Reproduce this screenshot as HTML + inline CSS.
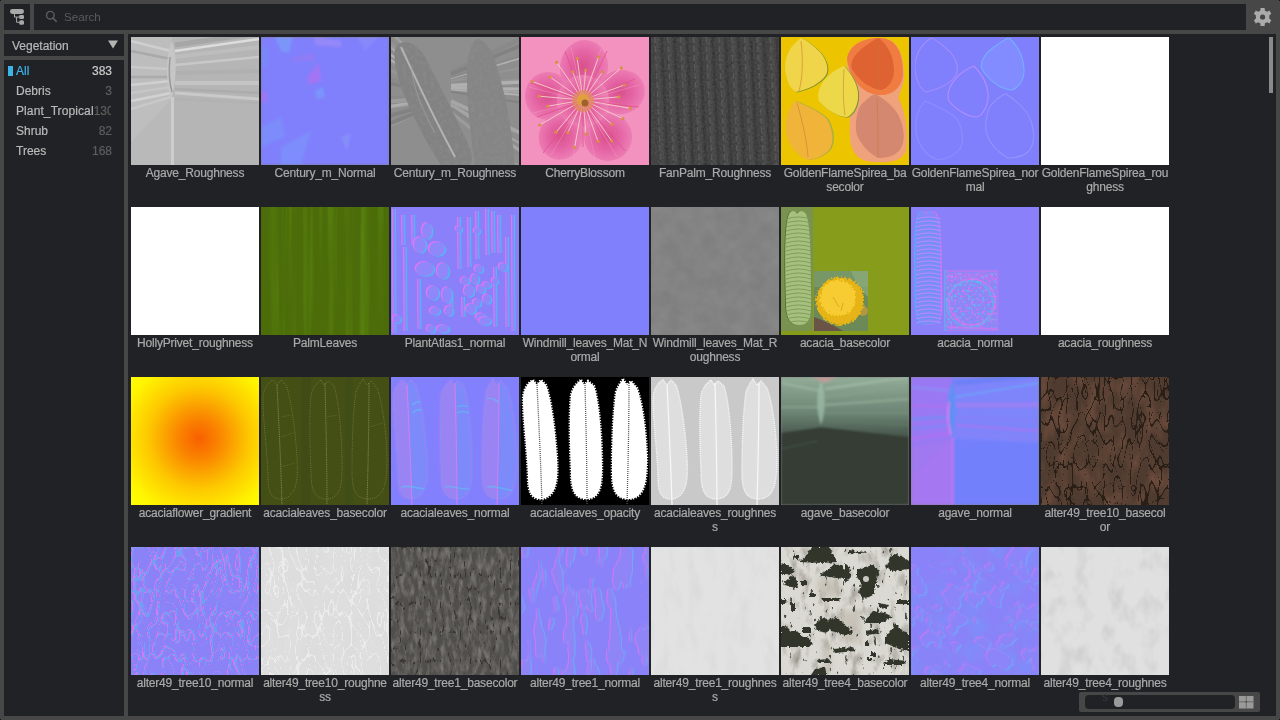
<!DOCTYPE html>
<html><head><meta charset="utf-8"><style>
*{margin:0;padding:0;box-sizing:border-box}
html,body{width:1280px;height:720px;overflow:hidden}
body{will-change:transform;background:#474747;font-family:"Liberation Sans",sans-serif;position:relative}
.tb-icon{position:absolute;left:4px;top:4px;width:26px;height:26px;background:#212225}
.tb-icon svg{position:absolute;left:0;top:0}
.search{position:absolute;left:34px;top:4px;width:1212px;height:26px;background:#212225}
.sicon{position:absolute;left:10px;top:5px}
.stext{position:absolute;left:30px;top:6px;font-size:11.6px;color:#5c5c5c;line-height:14px}
.gear{position:absolute;left:1250px;top:4px;width:26px;height:26px}
.gear svg{position:absolute;left:0;top:0}
.dd{position:absolute;left:4px;top:34px;width:120px;height:22px;background:#212225}
.dd span{position:absolute;left:8px;top:5px;font-size:12px;line-height:14px;color:#b8b8b8;-webkit-text-stroke:0.2px #b8b8b8}
.tri{position:absolute;left:104px;top:6px}
.list{position:absolute;left:4px;top:60px;width:120px;height:656px;background:#212225}
.it{position:relative;height:20px;width:120px}
.it:first-child{margin-top:1px}
.nm{position:absolute;left:12px;top:3px;font-size:12px;line-height:14px;color:#bababa;white-space:nowrap;-webkit-text-stroke:0.2px #bababa}
.ct{position:absolute;right:12px;top:3px;font-size:12px;line-height:14px;color:#5e5e5e;white-space:nowrap;-webkit-text-stroke:0.2px #5e5e5e}
.pt{position:absolute;left:12px;top:3px;width:95px;overflow:hidden;white-space:nowrap;font-size:12px;line-height:14px}
.pt .a{color:#bababa;-webkit-text-stroke:0.2px #bababa;letter-spacing:0.1px}
.pt .b{color:#5e5e5e;-webkit-text-stroke:0.2px #5e5e5e}
.sel .nm{color:#3cb4ea;-webkit-text-stroke:0.2px #3cb4ea}
.sel .ct{color:#cacaca;-webkit-text-stroke:0.2px #cacaca}
.mk{position:absolute;left:4px;top:5px;width:5px;height:10px;background:#3cb4ea}
.grid{position:absolute;left:128px;top:34px;width:1148px;height:682px;background:#212225;overflow:hidden}
.cell{position:absolute;width:128px;height:168px}
.th{position:absolute;left:0;top:0;width:128px;height:128px;overflow:hidden;background:#808080}
.th svg{display:block}
.lb{position:absolute;left:-10px;top:129px;width:148px;text-align:center;font-size:12px;line-height:14px;color:#aaaaaa;white-space:nowrap;letter-spacing:-0.2px;-webkit-text-stroke:0.2px #aaaaaa}
.sb{position:absolute;left:1141px;top:3px;width:4px;height:56px;background:#8a8a8a}
.slider{position:absolute;left:951px;top:658px;width:181px;height:20px;background:#474747;border-radius:2px}
.track{position:absolute;left:6px;top:3px;width:150px;height:14px;background:#212225;border-radius:4px}
.ghost{position:absolute;left:17px;top:-5px;font-size:12px;line-height:14px;color:#3a3a3a}
.thumb{position:absolute;left:29px;top:2px;width:9px;height:10px;background:#9a9a9a;border-radius:4px}
.gicon{position:absolute;left:160px;top:4px}

</style></head><body>
<div class="tb-icon"><svg width="26" height="26" viewBox="0 0 26 26">
<rect x="6" y="5" width="14" height="5" rx="2.4" fill="#a9a9a9"/>
<rect x="15.2" y="11" width="4.8" height="4" rx="1.3" fill="#a9a9a9"/>
<rect x="15.2" y="16.2" width="4.8" height="4.6" rx="1.5" fill="#a9a9a9"/>
<path d="M10.5 10 V13.1 H15.5 M12.6 13.1 V18.3 H15.5" stroke="#a9a9a9" stroke-width="1" fill="none"/>
</svg></div>
<div class="search"><svg class="sicon" width="16" height="16" viewBox="0 0 16 16"><circle cx="6.3" cy="6.2" r="3.8" stroke="#5c5c5c" stroke-width="1.4" fill="none"/><path d="M9 9 L12.2 12.4" stroke="#5c5c5c" stroke-width="1.6" stroke-linecap="round"/></svg><span class="stext">Search</span></div>
<div class="gear"><svg width="26" height="26" viewBox="0 0 26 26"><g transform="translate(12.6,13) scale(1.06)" fill="#ababab">
<path d="M-1.9 -8.4 H1.9 L2.2 -6 L4.3 -4.9 L6.4 -6.2 L8.2 -3 L6.3 -1.5 L6.3 1.5 L8.2 3 L6.4 6.2 L4.3 4.9 L2.2 6 L1.9 8.4 H-1.9 L-2.2 6 L-4.3 4.9 L-6.4 6.2 L-8.2 3 L-6.3 1.5 L-6.3 -1.5 L-8.2 -3 L-6.4 -6.2 L-4.3 -4.9 L-2.2 -6 Z"/>
<circle r="5.9"/></g><circle cx="12.6" cy="13" r="2.6" fill="#474747"/></svg></div>
<div class="dd"><span>Vegetation</span><svg class="tri" width="10" height="9" viewBox="0 0 10 9"><path d="M0 0.5 H10 L5 8.5 Z" fill="#b4b4b4"/></svg></div>
<div class="list">
 <div class="it sel"><i class="mk"></i><span class="nm">All</span><span class="ct">383</span></div>
 <div class="it"><span class="nm">Debris</span><span class="ct">3</span></div>
 <div class="it"><div class="pt"><span class="a">Plant_Tropical</span><span class="b">130</span></div></div>
 <div class="it"><span class="nm">Shrub</span><span class="ct">82</span></div>
 <div class="it"><span class="nm">Trees</span><span class="ct">168</span></div>
</div>
<div class="grid">
<div class="cell" style="left:3px;top:3px"><div class="th t1"><svg width="128" height="128" viewBox="0 0 128 128"><defs><filter id="wb1" x="0" y="0" width="100%" height="100%"><feGaussianBlur stdDeviation="0.7"/></filter></defs><g filter="url(#wb1)">
<rect width="128" height="128" fill="#b5b5b5"/>
<rect x="0" y="0" width="41" height="70" fill="#bdbdbd"/>
<polygon points="0,70 41,62 41,128 0,128" fill="#b9b9b9"/>
<polygon points="0,105 41,62 0,70" fill="#c2c2c2" opacity="0.6"/>
<g stroke-width="2.5" fill="none">
<path d="M0 4 L40 14" stroke="#cfcfcf"/>
<path d="M0 14 L40 22" stroke="#a9a9a9"/>
<path d="M0 30 L40 32" stroke="#c9c9c9"/>
<path d="M0 40 L40 40" stroke="#ababab"/>
<path d="M0 48 L40 44" stroke="#d0d0d0"/>
<path d="M0 56 L40 50" stroke="#c6c6c6"/>
<path d="M0 64 L40 56" stroke="#d2d2d2"/>
<path d="M0 72 L40 60" stroke="#c8c8c8"/>
<path d="M44 14 L128 2" stroke="#dcdcdc"/>
<path d="M44 8 L128 -4" stroke="#a6a6a6" stroke-width="5"/>
<path d="M44 20 L128 10" stroke="#bdbdbd" stroke-width="4"/>
<path d="M44 28 L128 20" stroke="#c8c8c8"/>
<path d="M44 36 L128 34" stroke="#b0b0b0" stroke-width="4"/>
<path d="M44 46 L128 46" stroke="#c4c4c4" stroke-width="4"/>
<path d="M44 52 L128 56" stroke="#acacac"/>
<path d="M44 56 L128 62" stroke="#c9c9c9" stroke-width="3"/>
<path d="M44 62 L128 66" stroke="#b2b2b2"/>
</g>
<rect x="40" y="60" width="3" height="68" fill="#cdcdcd"/>
<path d="M41 5 C35 15 34 45 40 62 C46 45 46 15 41 5Z" fill="#c6c6c6"/>
<path d="M39 20 C38 30 38 45 41 55" stroke="#9a9a9a" stroke-width="1.5" fill="none"/>
</g></svg></div><div class="lb">Agave_Roughness</div></div><div class="cell" style="left:133px;top:3px"><div class="th t2"><svg width="128" height="128" viewBox="0 0 128 128"><defs><filter id="wb2" x="0" y="0" width="100%" height="100%"><feGaussianBlur stdDeviation="1.0"/></filter></defs><g filter="url(#wb2)">
<rect width="128" height="128" fill="#8080fd"/>
<polygon points="14,0 32,0 28,16 20,14" fill="#7a9af8" opacity="0.8"/>
<polygon points="54,0 80,4 80,10 54,8" fill="#9a8af8" opacity="0.8"/>
<polygon points="32,20 54,16 54,24 30,24" fill="#9a78f0" opacity="0.6"/>
<polygon points="46,40 58,26 60,44 48,48" fill="#b070f0" opacity="0.7"/>
<polygon points="54,54 62,50 64,60 56,62" fill="#7898f8" opacity="0.8"/>
<polygon points="0,56 6,54 6,64 0,66" fill="#b070f0" opacity="0.6"/>
<polygon points="0,90 20,80 24,100 0,110" fill="#7898f8" opacity="0.5"/>
<polygon points="20,110 50,94 40,128 20,128" fill="#78a0f8" opacity="0.4"/>
<polygon points="96,0 118,0 104,14" fill="#8890f8" opacity="0.6"/>
<polygon points="80,100 90,96 86,114" fill="#8a98f8" opacity="0.6"/>
<polygon points="0,10 8,10 6,30 0,30" fill="#7090f8" opacity="0.4"/>
</g></svg></div><div class="lb">Century_m_Normal</div></div><div class="cell" style="left:263px;top:3px"><div class="th t3"><svg width="128" height="128" viewBox="0 0 128 128"><defs><filter id="c3b" x="0" y="0" width="100%" height="100%"><feGaussianBlur stdDeviation="0.4"/></filter><clipPath id="c3c"><path d="M6 8 C14 2 26 6 34 20 C46 44 60 70 72 96 C80 112 84 124 78 128 L50 128 C38 110 24 84 14 60 C6 40 0 18 6 8Z"/><path d="M86 2 C94 2 102 14 106 30 C114 56 120 86 124 128 L84 128 C80 100 76 70 76 44 C76 24 78 8 86 2Z"/></clipPath><filter id="c3n" x="0" y="0" width="100%" height="100%" color-interpolation-filters="sRGB"><feTurbulence type="fractalNoise" baseFrequency="0.25" numOctaves="3" seed="33" result="n"/><feColorMatrix in="n" type="matrix" values="0 0 0 0 0.56  0 0 0 0 0.56  0 0 0 0 0.56  1.2 0 0 0 -0.5"/></filter></defs>
<rect width="128" height="128" fill="#8e8e8e"/>
<g filter="url(#c3b)"><path d="M-5 60.2 L40 60.1" stroke="#8a8a8a" stroke-width="2.8"/><path d="M133 41.8 L60 47.5" stroke="#959595" stroke-width="1.5"/><path d="M-5 45.5 L40 54.9" stroke="#828282" stroke-width="3.1"/><path d="M133 58.1 L60 52.4" stroke="#b0b0b0" stroke-width="2.1"/><path d="M-5 -9.8 L40 35.6" stroke="#b0b0b0" stroke-width="1.9"/><path d="M133 55.1 L60 51.5" stroke="#a6a6a6" stroke-width="2.3"/><path d="M-5 21.1 L40 46.4" stroke="#b0b0b0" stroke-width="3.5"/><path d="M133 1.0 L60 35.3" stroke="#8a8a8a" stroke-width="3.5"/><path d="M-5 90.9 L40 70.8" stroke="#9c9c9c" stroke-width="1.5"/><path d="M133 -1.0 L60 34.7" stroke="#8a8a8a" stroke-width="2.8"/><path d="M-5 3.5 L40 40.2" stroke="#959595" stroke-width="3.9"/><path d="M133 6.7 L60 37.0" stroke="#959595" stroke-width="3.9"/><path d="M-5 69.8 L40 63.4" stroke="#b0b0b0" stroke-width="2.9"/><path d="M133 134.5 L60 75.3" stroke="#9c9c9c" stroke-width="2.9"/><path d="M-5 65.1 L40 61.8" stroke="#9c9c9c" stroke-width="2.5"/><path d="M133 52.0 L60 50.6" stroke="#b0b0b0" stroke-width="2.7"/><path d="M-5 80.2 L40 67.1" stroke="#b0b0b0" stroke-width="1.6"/><path d="M133 97.5 L60 64.2" stroke="#a6a6a6" stroke-width="3.9"/><path d="M-5 88.2 L40 69.9" stroke="#828282" stroke-width="3.9"/><path d="M133 118.2 L60 70.5" stroke="#959595" stroke-width="3.2"/><path d="M-5 6.8 L40 41.4" stroke="#a6a6a6" stroke-width="2.3"/><path d="M133 44.9 L60 48.5" stroke="#b0b0b0" stroke-width="3.5"/><path d="M-5 64.0 L40 61.4" stroke="#9c9c9c" stroke-width="2.5"/><path d="M133 117.1 L60 70.1" stroke="#9c9c9c" stroke-width="2.8"/><path d="M-5 22.9 L40 47.0" stroke="#959595" stroke-width="1.6"/><path d="M133 20.3 L60 41.1" stroke="#b0b0b0" stroke-width="1.8"/><path d="M-5 71.4 L40 64.0" stroke="#a6a6a6" stroke-width="1.7"/><path d="M133 30.5 L60 44.2" stroke="#959595" stroke-width="2.2"/><path d="M-5 40.9 L40 53.3" stroke="#8a8a8a" stroke-width="3.3"/><path d="M133 66.1 L60 54.8" stroke="#828282" stroke-width="2.0"/><path d="M-5 31.7 L40 50.1" stroke="#959595" stroke-width="3.2"/><path d="M133 116.6 L60 70.0" stroke="#a6a6a6" stroke-width="3.9"/><path d="M-5 14.8 L40 44.2" stroke="#b0b0b0" stroke-width="2.4"/><path d="M133 18.0 L60 40.4" stroke="#8a8a8a" stroke-width="2.0"/><path d="M-5 79.8 L40 66.9" stroke="#828282" stroke-width="3.8"/><path d="M133 108.6 L60 67.6" stroke="#a6a6a6" stroke-width="2.1"/><path d="M-5 -8.7 L40 35.9" stroke="#9c9c9c" stroke-width="2.1"/><path d="M133 7.2 L60 37.2" stroke="#828282" stroke-width="4.0"/><path d="M-5 64.5 L40 61.6" stroke="#9c9c9c" stroke-width="3.8"/><path d="M133 120.5 L60 71.2" stroke="#8a8a8a" stroke-width="3.6"/></g>
<path d="M6 8 C14 2 26 6 34 20 C46 44 60 70 72 96 C80 112 84 124 78 128 L50 128 C38 110 24 84 14 60 C6 40 0 18 6 8Z" fill="#828282"/>
<path d="M86 2 C94 2 102 14 106 30 C114 56 120 86 124 128 L84 128 C80 100 76 70 76 44 C76 24 78 8 86 2Z" fill="#858585"/>
<g clip-path="url(#c3c)"><rect width="128" height="128" filter="url(#c3n)"/></g>
<path d="M10 10 C24 40 40 76 64 120" stroke="#b4b4b4" stroke-width="2" fill="none"/>
<path d="M20 28 C22 50 30 70 44 96" stroke="#a0a0a0" stroke-width="1.2" fill="none" opacity="0.6"/>
</svg></div><div class="lb">Century_m_Roughness</div></div><div class="cell" style="left:393px;top:3px"><div class="th t4"><svg width="128" height="128" viewBox="0 0 128 128"><defs><radialGradient id="cbg" cx="0.48" cy="0.5" r="0.5"><stop offset="0" stop-color="#d8508c"/><stop offset="0.5" stop-color="#e462a2"/><stop offset="1" stop-color="#ec7cb4"/></radialGradient><filter id="cbb" x="0" y="0" width="100%" height="100%"><feGaussianBlur stdDeviation="0.5"/></filter></defs>
<rect width="128" height="128" fill="#f392be"/>
<g fill="url(#cbg)" filter="url(#cbb)">
<ellipse cx="63" cy="30" rx="24" ry="27" transform="rotate(8 63 30)"/>
<ellipse cx="100" cy="55" rx="24" ry="22" transform="rotate(-15 100 55)"/>
<ellipse cx="27" cy="59" rx="23" ry="24"/>
<ellipse cx="40" cy="99" rx="22" ry="24" transform="rotate(25 40 99)"/>
<ellipse cx="87" cy="100" rx="24" ry="24" transform="rotate(-20 87 100)"/>
<circle cx="62" cy="64" r="26"/>
</g>
<g stroke="#f8a0c8" stroke-width="0.8" opacity="0.5" fill="none">
<path d="M62 64 L50 10 M62 64 L80 12 M62 64 L118 48 M62 64 L112 72 M62 64 L8 50 M62 64 L12 76 M62 64 L30 118 M62 64 L52 120 M62 64 L96 120 M62 64 L74 122"/>
</g>
<path d="M62 64 L44 14 M62 64 L86 14 M62 64 L114 42 M62 64 L118 70 M62 64 L10 46 M62 64 L16 80 M62 64 L22 116 M62 64 L62 110 M62 64 L104 114 M62 64 L84 104" stroke="#e0508a" stroke-width="0.8"/>
<path d="M62 63 L11.3 44.5" stroke="#f6d0c8" stroke-width="0.9"/><circle cx="11.3" cy="44.5" r="1.6" fill="#d89040"/><path d="M62 63 L29.2 40.1" stroke="#f6d0c8" stroke-width="0.9"/><circle cx="29.2" cy="40.1" r="1.6" fill="#d89040"/><path d="M62 63 L35.6 25.3" stroke="#f6d0c8" stroke-width="0.9"/><circle cx="35.6" cy="25.3" r="1.6" fill="#d89040"/><path d="M62 63 L51.7 34.8" stroke="#f6d0c8" stroke-width="0.9"/><circle cx="51.7" cy="34.8" r="1.6" fill="#d89040"/><path d="M62 63 L56.2 21.4" stroke="#f6d0c8" stroke-width="0.9"/><circle cx="56.2" cy="21.4" r="1.6" fill="#d89040"/><path d="M62 63 L64.6 33.1" stroke="#f6d0c8" stroke-width="0.9"/><circle cx="64.6" cy="33.1" r="1.6" fill="#d89040"/><path d="M62 63 L77.7 19.8" stroke="#f6d0c8" stroke-width="0.9"/><circle cx="77.7" cy="19.8" r="1.6" fill="#d89040"/><path d="M62 63 L81.5 35.1" stroke="#f6d0c8" stroke-width="0.9"/><circle cx="81.5" cy="35.1" r="1.6" fill="#d89040"/><path d="M62 63 L100.3 30.9" stroke="#f6d0c8" stroke-width="0.9"/><circle cx="100.3" cy="30.9" r="1.6" fill="#d89040"/><path d="M62 63 L103.3 48.0" stroke="#f6d0c8" stroke-width="0.9"/><circle cx="103.3" cy="48.0" r="1.6" fill="#d89040"/><path d="M62 63 L97.9 59.9" stroke="#f6d0c8" stroke-width="0.9"/><circle cx="97.9" cy="59.9" r="1.6" fill="#d89040"/><path d="M62 63 L109.3 71.3" stroke="#f6d0c8" stroke-width="0.9"/><circle cx="109.3" cy="71.3" r="1.6" fill="#d89040"/><path d="M62 63 L101.9 81.6" stroke="#f6d0c8" stroke-width="0.9"/><circle cx="101.9" cy="81.6" r="1.6" fill="#d89040"/><path d="M62 63 L91.1 87.4" stroke="#f6d0c8" stroke-width="0.9"/><circle cx="91.1" cy="87.4" r="1.6" fill="#d89040"/><path d="M62 63 L90.7 104.0" stroke="#f6d0c8" stroke-width="0.9"/><circle cx="90.7" cy="104.0" r="1.6" fill="#d89040"/><path d="M62 63 L77.0 104.3" stroke="#f6d0c8" stroke-width="0.9"/><circle cx="77.0" cy="104.3" r="1.6" fill="#d89040"/><path d="M62 63 L65.0 96.9" stroke="#f6d0c8" stroke-width="0.9"/><circle cx="65.0" cy="96.9" r="1.6" fill="#d89040"/><path d="M62 63 L53.7 110.3" stroke="#f6d0c8" stroke-width="0.9"/><circle cx="53.7" cy="110.3" r="1.6" fill="#d89040"/><path d="M62 63 L46.8 95.6" stroke="#f6d0c8" stroke-width="0.9"/><circle cx="46.8" cy="95.6" r="1.6" fill="#d89040"/><path d="M62 63 L35.0 95.2" stroke="#f6d0c8" stroke-width="0.9"/><circle cx="35.0" cy="95.2" r="1.6" fill="#d89040"/><path d="M62 63 L18.7 88.0" stroke="#f6d0c8" stroke-width="0.9"/><circle cx="18.7" cy="88.0" r="1.6" fill="#d89040"/><path d="M62 63 L26.5 69.3" stroke="#f6d0c8" stroke-width="0.9"/><circle cx="26.5" cy="69.3" r="1.6" fill="#d89040"/><path d="M62 63 L18.2 59.2" stroke="#f6d0c8" stroke-width="0.9"/><circle cx="18.2" cy="59.2" r="1.6" fill="#d89040"/>
<circle cx="62" cy="64" r="11" fill="#e08860" opacity="0.8"/>
<circle cx="62" cy="63" r="6" fill="#e0a040"/>
<circle cx="64" cy="66" r="3.5" fill="#a06030"/>
</svg></div><div class="lb">CherryBlossom</div></div><div class="cell" style="left:523px;top:3px"><div class="th t5"><svg width="128" height="128" viewBox="0 0 128 128"><defs><filter id="fpn" x="0" y="0" width="100%" height="100%"><feTurbulence type="fractalNoise" baseFrequency="0.45" numOctaves="2" seed="3"/><feColorMatrix type="matrix" values="0 0 0 0 0.3  0 0 0 0 0.3  0 0 0 0 0.3  1 0 0 0 0"/></filter></defs><rect width="128" height="128" fill="#363636"/><path d="M4.0 0 L10.0 128" stroke="#4e4e4e" stroke-width="1.8" stroke-dasharray="6 3"/><path d="M6.0 0 L12.0 128" stroke="#3e3e3e" stroke-width="3"/><path d="M10.5 0 L16.5 128" stroke="#2c2c2c" stroke-width="2.5"/><path d="M16.8 0 L22.8 128" stroke="#4e4e4e" stroke-width="1.8" stroke-dasharray="6 3"/><path d="M18.8 0 L24.8 128" stroke="#3e3e3e" stroke-width="3"/><path d="M23.3 0 L29.3 128" stroke="#2c2c2c" stroke-width="2.5"/><path d="M29.6 0 L35.6 128" stroke="#4e4e4e" stroke-width="1.8" stroke-dasharray="6 3"/><path d="M31.6 0 L37.6 128" stroke="#3e3e3e" stroke-width="3"/><path d="M36.1 0 L42.1 128" stroke="#2c2c2c" stroke-width="2.5"/><path d="M42.4 0 L48.4 128" stroke="#4e4e4e" stroke-width="1.8" stroke-dasharray="6 3"/><path d="M44.4 0 L50.4 128" stroke="#3e3e3e" stroke-width="3"/><path d="M48.9 0 L54.9 128" stroke="#2c2c2c" stroke-width="2.5"/><path d="M55.2 0 L61.2 128" stroke="#4e4e4e" stroke-width="1.8" stroke-dasharray="6 3"/><path d="M57.2 0 L63.2 128" stroke="#3e3e3e" stroke-width="3"/><path d="M61.7 0 L67.7 128" stroke="#2c2c2c" stroke-width="2.5"/><path d="M68.0 0 L74.0 128" stroke="#4e4e4e" stroke-width="1.8" stroke-dasharray="6 3"/><path d="M70.0 0 L76.0 128" stroke="#3e3e3e" stroke-width="3"/><path d="M74.5 0 L80.5 128" stroke="#2c2c2c" stroke-width="2.5"/><path d="M80.8 0 L86.8 128" stroke="#4e4e4e" stroke-width="1.8" stroke-dasharray="6 3"/><path d="M82.8 0 L88.8 128" stroke="#3e3e3e" stroke-width="3"/><path d="M87.3 0 L93.3 128" stroke="#2c2c2c" stroke-width="2.5"/><path d="M93.6 0 L99.6 128" stroke="#4e4e4e" stroke-width="1.8" stroke-dasharray="6 3"/><path d="M95.6 0 L101.6 128" stroke="#3e3e3e" stroke-width="3"/><path d="M100.1 0 L106.1 128" stroke="#2c2c2c" stroke-width="2.5"/><path d="M106.4 0 L112.4 128" stroke="#4e4e4e" stroke-width="1.8" stroke-dasharray="6 3"/><path d="M108.4 0 L114.4 128" stroke="#3e3e3e" stroke-width="3"/><path d="M112.9 0 L118.9 128" stroke="#2c2c2c" stroke-width="2.5"/><path d="M119.2 0 L125.2 128" stroke="#4e4e4e" stroke-width="1.8" stroke-dasharray="6 3"/><path d="M121.2 0 L127.2 128" stroke="#3e3e3e" stroke-width="3"/><path d="M125.7 0 L131.7 128" stroke="#2c2c2c" stroke-width="2.5"/><rect width="128" height="128" filter="url(#fpn)" opacity="0.3"/></svg></div><div class="lb">FanPalm_Roughness</div></div><div class="cell" style="left:653px;top:3px"><div class="th t6"><svg width="128" height="128" viewBox="0 0 128 128"><defs><filter id="gfb" x="0" y="0" width="100%" height="100%"><feGaussianBlur stdDeviation="0.6"/></filter></defs>
<rect width="128" height="128" fill="#ecc400"/>
<g filter="url(#gfb)">
<path d="M20 1 C26 3 34 10 40 16 C46 24 48 32 45 38 C40 46 28 52 15 55 C9 52 5 44 4 30 C4 18 10 8 20 1Z" fill="#7a9030" transform="translate(1,0.5)"/>
<path d="M20 1 C26 3 34 10 40 16 C46 24 48 32 45 38 C40 46 28 52 15 55 C9 52 5 44 4 30 C4 18 10 8 20 1Z" fill="#f0d448"/>
<path d="M14 64 C24 68 38 74 46 82 C52 92 53 104 49 112 C42 120 34 122 27 123 C18 120 10 112 6 100 C3 88 5 74 14 64Z" fill="#a8b040" transform="translate(1.5,0)"/>
<path d="M14 64 C24 68 38 74 46 82 C52 92 53 104 49 112 C42 120 34 122 27 123 C18 120 10 112 6 100 C3 88 5 74 14 64Z" fill="#f0b43a"/>
<path d="M66 22 C68 6 86 0 100 1 C118 2 124 20 123 42 C122 52 117 56 118 62 C126 78 127 100 125 114 C121 125 106 126 94 125 C80 125 70 118 69 100 C68 82 70 66 74 58 C70 52 66 40 66 22Z" fill="#f0a27c"/>
<path d="M66 22 C68 6 86 0 100 1 C116 2 122 16 122 36 C122 50 112 58 100 58 C86 58 70 48 66 22Z" fill="#f07c42"/>
<path d="M98 1 C106 8 113 18 113 34 C113 44 106 52 100 53 C90 52 78 44 71 32 C68 24 76 14 86 8 C90 5 94 2 98 1Z" fill="#de6232"/>
<path d="M95 57 C106 64 116 72 120 84 C124 96 124 106 118 114 C112 120 104 121 97 121 C88 116 80 108 76 98 C73 88 76 74 80 68 C86 62 90 58 95 57Z" fill="#d48870"/>
<path d="M63 29 C70 36 76 46 77 56 C78 68 72 78 66 80 C58 80 46 74 38 64 C35 56 40 46 46 40 C52 34 58 31 63 29Z" fill="#7a9030" transform="translate(1,0.5)"/>
<path d="M63 29 C70 36 76 46 77 56 C78 68 72 78 66 80 C58 80 46 74 38 64 C35 56 40 46 46 40 C52 34 58 31 63 29Z" fill="#ecd84a"/>

<path d="M20 4 C22 20 22 40 18 54 M63 32 C62 50 62 64 64 78 M16 66 C22 86 26 106 27 120 M98 4 C98 20 98 36 98 52 M96 60 C97 80 97 100 97 120" stroke="#c87838" stroke-width="0.9" fill="none" opacity="0.6"/>
</g>
</svg></div><div class="lb">GoldenFlameSpirea_ba<br>secolor</div></div><div class="cell" style="left:783px;top:3px"><div class="th t7"><svg width="128" height="128" viewBox="0 0 128 128"><defs><filter id="gfb7" x="0" y="0" width="100%" height="100%"><feGaussianBlur stdDeviation="0.4"/></filter></defs>
<rect width="128" height="128" fill="#8080fd"/>
<g fill="none" stroke-width="1.1" filter="url(#gfb7)">
<path d="M20 1 C26 3 34 10 40 16 C46 24 48 32 45 38 C40 46 28 52 15 55 C9 52 5 44 4 30 C4 18 10 8 20 1Z" stroke="#b090ff" opacity="0.7"/>
<path d="M63 29 C70 36 76 46 77 56 C78 68 72 78 66 80 C58 80 46 74 38 64 C35 56 40 46 46 40 C52 34 58 31 63 29Z" stroke="#c090ff" opacity="0.8"/>
<path d="M14 64 C24 68 38 74 46 82 C52 92 53 104 49 112 C42 120 34 122 27 123 C18 120 10 112 6 100 C3 88 5 74 14 64Z" stroke="#9a98ff" opacity="0.6"/>
<path d="M98 1 C106 8 113 18 113 34 C113 44 106 52 100 53 C90 52 78 44 71 32 C68 24 76 14 86 8 C90 5 94 2 98 1Z" stroke="#70b8ff" opacity="0.9"/>
<path d="M95 57 C106 64 116 72 120 84 C124 96 124 106 118 114 C112 120 104 121 97 121 C88 116 80 108 76 98 C73 88 76 74 80 68 C86 62 90 58 95 57Z" stroke="#a0a0ff" opacity="0.6"/>
</g>
<path d="M98 1 C106 8 113 18 113 34 C113 44 106 52 100 53 C90 52 78 44 71 32 C68 24 76 14 86 8 C90 5 94 2 98 1Z" fill="#88a4ff" opacity="0.35"/>
</svg></div><div class="lb">GoldenFlameSpirea_nor<br>mal</div></div><div class="cell" style="left:913px;top:3px"><div class="th t8"><svg width="128" height="128" viewBox="0 0 128 128"><defs></defs><rect width="128" height="128" fill="#ffffff"/></svg></div><div class="lb">GoldenFlameSpirea_rou<br>ghness</div></div><div class="cell" style="left:3px;top:173px"><div class="th t9"><svg width="128" height="128" viewBox="0 0 128 128"><defs></defs><rect width="128" height="128" fill="#ffffff"/></svg></div><div class="lb">HollyPrivet_roughness</div></div><div class="cell" style="left:133px;top:173px"><div class="th t10"><svg width="128" height="128" viewBox="0 0 128 128"><defs><filter id="plm" x="0" y="0" width="100%" height="100%" color-interpolation-filters="sRGB"><feTurbulence type="fractalNoise" baseFrequency="0.12 0.004" numOctaves="3" seed="9"/><feColorMatrix type="matrix" values="0 0 0 0 0.36  0 0 0 0 0.52  0 0 0 0 0.06  2.2 0 0 0 -1.0"/></filter></defs><rect width="128" height="128" fill="#4b6c09"/><rect width="128" height="128" filter="url(#plm)"/></svg></div><div class="lb">PalmLeaves</div></div><div class="cell" style="left:263px;top:173px"><div class="th t11"><svg width="128" height="128" viewBox="0 0 128 128"><defs><filter id="pab" x="0" y="0" width="100%" height="100%"><feGaussianBlur stdDeviation="0.6"/></filter></defs><g filter="url(#pab)"><rect width="128" height="128" fill="#8a80fa"/><path d="M2 2 L4 2 L4.5 126 L2.5 126Z" fill="#e674f2" transform="translate(-1.0,-0.0)"/><path d="M2 2 L4 2 L4.5 126 L2.5 126Z" fill="#52baf2" transform="translate(1.0,0.0)"/><path d="M2 2 L4 2 L4.5 126 L2.5 126Z" fill="#9088fa"/><path d="M11 8 L13 8 L13.5 38 L11.5 38Z" fill="#e674f2" transform="translate(-1.0,-0.0)"/><path d="M11 8 L13 8 L13.5 38 L11.5 38Z" fill="#52baf2" transform="translate(1.0,0.0)"/><path d="M11 8 L13 8 L13.5 38 L11.5 38Z" fill="#9088fa"/><path d="M21 8 L23 8 L23.5 38 L21.5 38Z" fill="#e674f2" transform="translate(-1.0,-0.0)"/><path d="M21 8 L23 8 L23.5 38 L21.5 38Z" fill="#52baf2" transform="translate(1.0,0.0)"/><path d="M21 8 L23 8 L23.5 38 L21.5 38Z" fill="#9088fa"/><path d="M13 40 L15 40 L15.5 124 L13.5 124Z" fill="#e674f2" transform="translate(-1.0,-0.0)"/><path d="M13 40 L15 40 L15.5 124 L13.5 124Z" fill="#52baf2" transform="translate(1.0,0.0)"/><path d="M13 40 L15 40 L15.5 124 L13.5 124Z" fill="#9088fa"/><path d="M27 72 L29 72 L29.5 122 L27.5 122Z" fill="#e674f2" transform="translate(-1.0,-0.0)"/><path d="M27 72 L29 72 L29.5 122 L27.5 122Z" fill="#52baf2" transform="translate(1.0,0.0)"/><path d="M27 72 L29 72 L29.5 122 L27.5 122Z" fill="#9088fa"/><path d="M67 10 L69 10 L69.5 62 L67.5 62Z" fill="#e674f2" transform="translate(-1.0,-0.0)"/><path d="M67 10 L69 10 L69.5 62 L67.5 62Z" fill="#52baf2" transform="translate(1.0,0.0)"/><path d="M67 10 L69 10 L69.5 62 L67.5 62Z" fill="#9088fa"/><path d="M77 10 L79 10 L79.5 60 L77.5 60Z" fill="#e674f2" transform="translate(-1.0,-0.0)"/><path d="M77 10 L79 10 L79.5 60 L77.5 60Z" fill="#52baf2" transform="translate(1.0,0.0)"/><path d="M77 10 L79 10 L79.5 60 L77.5 60Z" fill="#9088fa"/><path d="M85 4 L87 4 L87.5 52 L85.5 52Z" fill="#e674f2" transform="translate(-1.0,-0.0)"/><path d="M85 4 L87 4 L87.5 52 L85.5 52Z" fill="#52baf2" transform="translate(1.0,0.0)"/><path d="M85 4 L87 4 L87.5 52 L85.5 52Z" fill="#9088fa"/><path d="M95 2 L97 2 L97.5 48 L95.5 48Z" fill="#e674f2" transform="translate(-1.0,-0.0)"/><path d="M95 2 L97 2 L97.5 48 L95.5 48Z" fill="#52baf2" transform="translate(1.0,0.0)"/><path d="M95 2 L97 2 L97.5 48 L95.5 48Z" fill="#9088fa"/><path d="M101 4 L103 4 L103.5 46 L101.5 46Z" fill="#e674f2" transform="translate(-1.0,-0.0)"/><path d="M101 4 L103 4 L103.5 46 L101.5 46Z" fill="#52baf2" transform="translate(1.0,0.0)"/><path d="M101 4 L103 4 L103.5 46 L101.5 46Z" fill="#9088fa"/><path d="M107 8 L109 8 L109.5 46 L107.5 46Z" fill="#e674f2" transform="translate(-1.0,-0.0)"/><path d="M107 8 L109 8 L109.5 46 L107.5 46Z" fill="#52baf2" transform="translate(1.0,0.0)"/><path d="M107 8 L109 8 L109.5 46 L107.5 46Z" fill="#9088fa"/><path d="M115 30 L117 30 L117.5 120 L115.5 120Z" fill="#e674f2" transform="translate(-1.0,-0.0)"/><path d="M115 30 L117 30 L117.5 120 L115.5 120Z" fill="#52baf2" transform="translate(1.0,0.0)"/><path d="M115 30 L117 30 L117.5 120 L115.5 120Z" fill="#9088fa"/><path d="M121 8 L123 8 L123.5 124 L121.5 124Z" fill="#e674f2" transform="translate(-1.0,-0.0)"/><path d="M121 8 L123 8 L123.5 124 L121.5 124Z" fill="#52baf2" transform="translate(1.0,0.0)"/><path d="M121 8 L123 8 L123.5 124 L121.5 124Z" fill="#9088fa"/><path d="M103 60 L105 60 L105.5 120 L103.5 120Z" fill="#e674f2" transform="translate(-1.0,-0.0)"/><path d="M103 60 L105 60 L105.5 120 L103.5 120Z" fill="#52baf2" transform="translate(1.0,0.0)"/><path d="M103 60 L105 60 L105.5 120 L103.5 120Z" fill="#9088fa"/><path d="M71 90 L73 90 L73.5 110 L71.5 110Z" fill="#e674f2" transform="translate(-1.0,-0.0)"/><path d="M71 90 L73 90 L73.5 110 L71.5 110Z" fill="#52baf2" transform="translate(1.0,0.0)"/><path d="M71 90 L73 90 L73.5 110 L71.5 110Z" fill="#9088fa"/><path d="M59 84 L61 84 L61.5 100 L59.5 100Z" fill="#e674f2" transform="translate(-1.0,-0.0)"/><path d="M59 84 L61 84 L61.5 100 L59.5 100Z" fill="#52baf2" transform="translate(1.0,0.0)"/><path d="M59 84 L61 84 L61.5 100 L59.5 100Z" fill="#9088fa"/><path d="M31 24 A5 8 0 1 0 41 24 A5 8 0 1 0 31 24Z" fill="#e674f2" transform="translate(-1.3,-0.7)"/><path d="M31 24 A5 8 0 1 0 41 24 A5 8 0 1 0 31 24Z" fill="#52baf2" transform="translate(1.3,0.7)"/><path d="M31 24 A5 8 0 1 0 41 24 A5 8 0 1 0 31 24Z" fill="#9088fa"/><path d="M23 38 A6 8 0 1 0 35 38 A6 8 0 1 0 23 38Z" fill="#e674f2" transform="translate(-1.3,-0.7)"/><path d="M23 38 A6 8 0 1 0 35 38 A6 8 0 1 0 23 38Z" fill="#52baf2" transform="translate(1.3,0.7)"/><path d="M23 38 A6 8 0 1 0 35 38 A6 8 0 1 0 23 38Z" fill="#9088fa"/><path d="M38 42 A8 7 0 1 0 54 42 A8 7 0 1 0 38 42Z" fill="#e674f2" transform="translate(-1.3,-0.7)"/><path d="M38 42 A8 7 0 1 0 54 42 A8 7 0 1 0 38 42Z" fill="#52baf2" transform="translate(1.3,0.7)"/><path d="M38 42 A8 7 0 1 0 54 42 A8 7 0 1 0 38 42Z" fill="#9088fa"/><path d="M25 62 A9 7 0 1 0 43 62 A9 7 0 1 0 25 62Z" fill="#e674f2" transform="translate(-1.3,-0.7)"/><path d="M25 62 A9 7 0 1 0 43 62 A9 7 0 1 0 25 62Z" fill="#52baf2" transform="translate(1.3,0.7)"/><path d="M25 62 A9 7 0 1 0 43 62 A9 7 0 1 0 25 62Z" fill="#9088fa"/><path d="M46 64 A6 8 0 1 0 58 64 A6 8 0 1 0 46 64Z" fill="#e674f2" transform="translate(-1.3,-0.7)"/><path d="M46 64 A6 8 0 1 0 58 64 A6 8 0 1 0 46 64Z" fill="#52baf2" transform="translate(1.3,0.7)"/><path d="M46 64 A6 8 0 1 0 58 64 A6 8 0 1 0 46 64Z" fill="#9088fa"/><path d="M36 86 A6 7 0 1 0 48 86 A6 7 0 1 0 36 86Z" fill="#e674f2" transform="translate(-1.3,-0.7)"/><path d="M36 86 A6 7 0 1 0 48 86 A6 7 0 1 0 36 86Z" fill="#52baf2" transform="translate(1.3,0.7)"/><path d="M36 86 A6 7 0 1 0 48 86 A6 7 0 1 0 36 86Z" fill="#9088fa"/><path d="M51 88 A5 8 0 1 0 61 88 A5 8 0 1 0 51 88Z" fill="#e674f2" transform="translate(-1.3,-0.7)"/><path d="M51 88 A5 8 0 1 0 61 88 A5 8 0 1 0 51 88Z" fill="#52baf2" transform="translate(1.3,0.7)"/><path d="M51 88 A5 8 0 1 0 61 88 A5 8 0 1 0 51 88Z" fill="#9088fa"/><path d="M39 104 A5 4 0 1 0 49 104 A5 4 0 1 0 39 104Z" fill="#e674f2" transform="translate(-1.3,-0.7)"/><path d="M39 104 A5 4 0 1 0 49 104 A5 4 0 1 0 39 104Z" fill="#52baf2" transform="translate(1.3,0.7)"/><path d="M39 104 A5 4 0 1 0 49 104 A5 4 0 1 0 39 104Z" fill="#9088fa"/><path d="M54 104 A4 5 0 1 0 62 104 A4 5 0 1 0 54 104Z" fill="#e674f2" transform="translate(-1.3,-0.7)"/><path d="M54 104 A4 5 0 1 0 62 104 A4 5 0 1 0 54 104Z" fill="#52baf2" transform="translate(1.3,0.7)"/><path d="M54 104 A4 5 0 1 0 62 104 A4 5 0 1 0 54 104Z" fill="#9088fa"/><path d="M70 74 A4 4 0 1 0 78 74 A4 4 0 1 0 70 74Z" fill="#e674f2" transform="translate(-1.3,-0.7)"/><path d="M70 74 A4 4 0 1 0 78 74 A4 4 0 1 0 70 74Z" fill="#52baf2" transform="translate(1.3,0.7)"/><path d="M70 74 A4 4 0 1 0 78 74 A4 4 0 1 0 70 74Z" fill="#9088fa"/><path d="M80 72 A4 5 0 1 0 88 72 A4 5 0 1 0 80 72Z" fill="#e674f2" transform="translate(-1.3,-0.7)"/><path d="M80 72 A4 5 0 1 0 88 72 A4 5 0 1 0 80 72Z" fill="#52baf2" transform="translate(1.3,0.7)"/><path d="M80 72 A4 5 0 1 0 88 72 A4 5 0 1 0 80 72Z" fill="#9088fa"/><path d="M73 84 A5 6 0 1 0 83 84 A5 6 0 1 0 73 84Z" fill="#e674f2" transform="translate(-1.3,-0.7)"/><path d="M73 84 A5 6 0 1 0 83 84 A5 6 0 1 0 73 84Z" fill="#52baf2" transform="translate(1.3,0.7)"/><path d="M73 84 A5 6 0 1 0 83 84 A5 6 0 1 0 73 84Z" fill="#9088fa"/><path d="M86 82 A4 4 0 1 0 94 82 A4 4 0 1 0 86 82Z" fill="#e674f2" transform="translate(-1.3,-0.7)"/><path d="M86 82 A4 4 0 1 0 94 82 A4 4 0 1 0 86 82Z" fill="#52baf2" transform="translate(1.3,0.7)"/><path d="M86 82 A4 4 0 1 0 94 82 A4 4 0 1 0 86 82Z" fill="#9088fa"/><path d="M92 92 A4 5 0 1 0 100 92 A4 5 0 1 0 92 92Z" fill="#e674f2" transform="translate(-1.3,-0.7)"/><path d="M92 92 A4 5 0 1 0 100 92 A4 5 0 1 0 92 92Z" fill="#52baf2" transform="translate(1.3,0.7)"/><path d="M92 92 A4 5 0 1 0 100 92 A4 5 0 1 0 92 92Z" fill="#9088fa"/><path d="M82 96 A4 4 0 1 0 90 96 A4 4 0 1 0 82 96Z" fill="#e674f2" transform="translate(-1.3,-0.7)"/><path d="M82 96 A4 4 0 1 0 90 96 A4 4 0 1 0 82 96Z" fill="#52baf2" transform="translate(1.3,0.7)"/><path d="M82 96 A4 4 0 1 0 90 96 A4 4 0 1 0 82 96Z" fill="#9088fa"/><path d="M75 102 A5 5 0 1 0 85 102 A5 5 0 1 0 75 102Z" fill="#e674f2" transform="translate(-1.3,-0.7)"/><path d="M75 102 A5 5 0 1 0 85 102 A5 5 0 1 0 75 102Z" fill="#52baf2" transform="translate(1.3,0.7)"/><path d="M75 102 A5 5 0 1 0 85 102 A5 5 0 1 0 75 102Z" fill="#9088fa"/><path d="M85 110 A5 4 0 1 0 95 110 A5 4 0 1 0 85 110Z" fill="#e674f2" transform="translate(-1.3,-0.7)"/><path d="M85 110 A5 4 0 1 0 95 110 A5 4 0 1 0 85 110Z" fill="#52baf2" transform="translate(1.3,0.7)"/><path d="M85 110 A5 4 0 1 0 95 110 A5 4 0 1 0 85 110Z" fill="#9088fa"/><path d="M92 78 A4 3 0 1 0 100 78 A4 3 0 1 0 92 78Z" fill="#e674f2" transform="translate(-1.3,-0.7)"/><path d="M92 78 A4 3 0 1 0 100 78 A4 3 0 1 0 92 78Z" fill="#52baf2" transform="translate(1.3,0.7)"/><path d="M92 78 A4 3 0 1 0 100 78 A4 3 0 1 0 92 78Z" fill="#9088fa"/><path d="M83 24 A3 3 0 1 0 89 24 A3 3 0 1 0 83 24Z" fill="#e674f2" transform="translate(-1.3,-0.7)"/><path d="M83 24 A3 3 0 1 0 89 24 A3 3 0 1 0 83 24Z" fill="#52baf2" transform="translate(1.3,0.7)"/><path d="M83 24 A3 3 0 1 0 89 24 A3 3 0 1 0 83 24Z" fill="#9088fa"/><path d="M84 62 A4 4 0 1 0 92 62 A4 4 0 1 0 84 62Z" fill="#e674f2" transform="translate(-1.3,-0.7)"/><path d="M84 62 A4 4 0 1 0 92 62 A4 4 0 1 0 84 62Z" fill="#52baf2" transform="translate(1.3,0.7)"/><path d="M84 62 A4 4 0 1 0 92 62 A4 4 0 1 0 84 62Z" fill="#9088fa"/><path d="M65 22 A3 3 0 1 0 71 22 A3 3 0 1 0 65 22Z" fill="#e674f2" transform="translate(-1.3,-0.7)"/><path d="M65 22 A3 3 0 1 0 71 22 A3 3 0 1 0 65 22Z" fill="#52baf2" transform="translate(1.3,0.7)"/><path d="M65 22 A3 3 0 1 0 71 22 A3 3 0 1 0 65 22Z" fill="#9088fa"/><path d="M46 122 A6 4 0 1 0 58 122 A6 4 0 1 0 46 122Z" fill="#e674f2" transform="translate(-1.3,-0.7)"/><path d="M46 122 A6 4 0 1 0 58 122 A6 4 0 1 0 46 122Z" fill="#52baf2" transform="translate(1.3,0.7)"/><path d="M46 122 A6 4 0 1 0 58 122 A6 4 0 1 0 46 122Z" fill="#9088fa"/><path d="M36 122 A4 4 0 1 0 44 122 A4 4 0 1 0 36 122Z" fill="#e674f2" transform="translate(-1.3,-0.7)"/><path d="M36 122 A4 4 0 1 0 44 122 A4 4 0 1 0 36 122Z" fill="#52baf2" transform="translate(1.3,0.7)"/><path d="M36 122 A4 4 0 1 0 44 122 A4 4 0 1 0 36 122Z" fill="#9088fa"/><path d="M88 114 A6 4 0 1 0 100 114 A6 4 0 1 0 88 114Z" fill="#e674f2" transform="translate(-1.3,-0.7)"/><path d="M88 114 A6 4 0 1 0 100 114 A6 4 0 1 0 88 114Z" fill="#52baf2" transform="translate(1.3,0.7)"/><path d="M88 114 A6 4 0 1 0 100 114 A6 4 0 1 0 88 114Z" fill="#9088fa"/><path d="M2 112 A4 4 0 1 0 10 112 A4 4 0 1 0 2 112Z" fill="#e674f2" transform="translate(-1.3,-0.7)"/><path d="M2 112 A4 4 0 1 0 10 112 A4 4 0 1 0 2 112Z" fill="#52baf2" transform="translate(1.3,0.7)"/><path d="M2 112 A4 4 0 1 0 10 112 A4 4 0 1 0 2 112Z" fill="#9088fa"/><path d="M108 60 A4 4 0 1 0 116 60 A4 4 0 1 0 108 60Z" fill="#e674f2" transform="translate(-1.3,-0.7)"/><path d="M108 60 A4 4 0 1 0 116 60 A4 4 0 1 0 108 60Z" fill="#52baf2" transform="translate(1.3,0.7)"/><path d="M108 60 A4 4 0 1 0 116 60 A4 4 0 1 0 108 60Z" fill="#9088fa"/><path d="M101 74 A3 3 0 1 0 107 74 A3 3 0 1 0 101 74Z" fill="#e674f2" transform="translate(-1.3,-0.7)"/><path d="M101 74 A3 3 0 1 0 107 74 A3 3 0 1 0 101 74Z" fill="#52baf2" transform="translate(1.3,0.7)"/><path d="M101 74 A3 3 0 1 0 107 74 A3 3 0 1 0 101 74Z" fill="#9088fa"/></g></svg></div><div class="lb">PlantAtlas1_normal</div></div><div class="cell" style="left:393px;top:173px"><div class="th t12"><svg width="128" height="128" viewBox="0 0 128 128"><defs></defs><rect width="128" height="128" fill="#8080fd"/></svg></div><div class="lb">Windmill_leaves_Mat_N<br>ormal</div></div><div class="cell" style="left:523px;top:173px"><div class="th t13"><svg width="128" height="128" viewBox="0 0 128 128"><defs><filter id="wmn" x="0" y="0" width="100%" height="100%"><feTurbulence type="fractalNoise" baseFrequency="0.06" numOctaves="3" seed="7"/><feColorMatrix type="matrix" values="0 0 0 0 0.5  0 0 0 0 0.5  0 0 0 0 0.5  1 0 0 0 0"/></filter></defs><rect width="128" height="128" fill="#7b7b7b"/><rect width="128" height="128" filter="url(#wmn)" opacity="0.25"/></svg></div><div class="lb">Windmill_leaves_Mat_R<br>oughness</div></div><div class="cell" style="left:653px;top:173px"><div class="th t14"><svg width="128" height="128" viewBox="0 0 128 128"><defs><filter id="fzf" x="-10%" y="-10%" width="120%" height="120%"><feTurbulence type="fractalNoise" baseFrequency="0.5" numOctaves="2" seed="2" result="t"/><feDisplacementMap in="SourceGraphic" in2="t" scale="6" xChannelSelector="R" yChannelSelector="G"/></filter></defs>
<rect width="128" height="128" fill="#889c1c"/>
<rect x="0" y="0" width="32" height="128" fill="#7a9250"/>
<path d="M8 7 C10 3 14 3 16 7 C18 3 22 3 25 7 C29 16 30 40 30 100 C30 112 27 118 18 118 C9 118 6 112 5 100 C4 60 3 20 8 7Z" fill="#4e6a30" transform="translate(-0.8,0)"/>
<path d="M8 7 C10 3 14 3 16 7 C18 3 22 3 25 7 C29 16 30 40 30 100 C30 112 27 118 18 118 C9 118 6 112 5 100 C4 60 3 20 8 7Z" fill="#a6c07e"/>
<path d="M5 12 Q17.5 8 30 12" stroke="#7c9858" stroke-width="0.9" fill="none"/><path d="M5 16 Q17.5 12 30 16" stroke="#7c9858" stroke-width="0.9" fill="none"/><path d="M5 20 Q17.5 16 30 20" stroke="#7c9858" stroke-width="0.9" fill="none"/><path d="M5 24 Q17.5 20 30 24" stroke="#7c9858" stroke-width="0.9" fill="none"/><path d="M5 28 Q17.5 24 30 28" stroke="#7c9858" stroke-width="0.9" fill="none"/><path d="M5 32 Q17.5 28 30 32" stroke="#7c9858" stroke-width="0.9" fill="none"/><path d="M5 36 Q17.5 32 30 36" stroke="#7c9858" stroke-width="0.9" fill="none"/><path d="M5 40 Q17.5 36 30 40" stroke="#7c9858" stroke-width="0.9" fill="none"/><path d="M5 44 Q17.5 40 30 44" stroke="#7c9858" stroke-width="0.9" fill="none"/><path d="M5 48 Q17.5 44 30 48" stroke="#7c9858" stroke-width="0.9" fill="none"/><path d="M5 52 Q17.5 48 30 52" stroke="#7c9858" stroke-width="0.9" fill="none"/><path d="M5 56 Q17.5 52 30 56" stroke="#7c9858" stroke-width="0.9" fill="none"/><path d="M5 60 Q17.5 56 30 60" stroke="#7c9858" stroke-width="0.9" fill="none"/><path d="M5 64 Q17.5 60 30 64" stroke="#7c9858" stroke-width="0.9" fill="none"/><path d="M5 68 Q17.5 64 30 68" stroke="#7c9858" stroke-width="0.9" fill="none"/><path d="M5 72 Q17.5 68 30 72" stroke="#7c9858" stroke-width="0.9" fill="none"/><path d="M5 76 Q17.5 72 30 76" stroke="#7c9858" stroke-width="0.9" fill="none"/><path d="M5 80 Q17.5 76 30 80" stroke="#7c9858" stroke-width="0.9" fill="none"/><path d="M5 84 Q17.5 80 30 84" stroke="#7c9858" stroke-width="0.9" fill="none"/><path d="M5 88 Q17.5 84 30 88" stroke="#7c9858" stroke-width="0.9" fill="none"/><path d="M5 92 Q17.5 88 30 92" stroke="#7c9858" stroke-width="0.9" fill="none"/><path d="M5 96 Q17.5 92 30 96" stroke="#7c9858" stroke-width="0.9" fill="none"/><path d="M5 100 Q17.5 96 30 100" stroke="#7c9858" stroke-width="0.9" fill="none"/><path d="M5 104 Q17.5 100 30 104" stroke="#7c9858" stroke-width="0.9" fill="none"/><path d="M5 108 Q17.5 104 30 108" stroke="#7c9858" stroke-width="0.9" fill="none"/><path d="M5 112 Q17.5 108 30 112" stroke="#7c9858" stroke-width="0.9" fill="none"/><path d="M5 116 Q17.5 112 30 116" stroke="#7c9858" stroke-width="0.9" fill="none"/>
<rect x="33" y="64" width="54" height="60" fill="#6c8a58"/>
<rect x="33" y="64" width="54" height="16" fill="#80a070" opacity="0.6"/>
<path d="M70 64 L87 64 L87 90 C80 84 74 74 70 64Z" fill="#90b080" opacity="0.6"/>
<path d="M33 110 C44 114 56 120 62 124 L33 124Z" fill="#6a5448"/>
<circle cx="82" cy="104" r="5" fill="#e0a030" opacity="0.6"/>
<g filter="url(#fzf)">
<circle cx="59" cy="94" r="24" fill="#e6b414"/>
<circle cx="57" cy="91" r="18" fill="#f6cc30"/>
</g>
<path d="M62 96 L60 104 M52 90 L58 100" stroke="#c08a10" stroke-width="1" opacity="0.5"/>
<rect x="0" y="124" width="128" height="4" fill="#889c1c"/>
</svg></div><div class="lb">acacia_basecolor</div></div><div class="cell" style="left:783px;top:173px"><div class="th t15"><svg width="128" height="128" viewBox="0 0 128 128"><defs><filter id="anb" x="0" y="0" width="100%" height="100%"><feGaussianBlur stdDeviation="0.6"/></filter><filter id="ann" x="0" y="0" width="100%" height="100%" color-interpolation-filters="sRGB"><feTurbulence type="fractalNoise" baseFrequency="0.35" numOctaves="2" seed="5" result="n"/><feColorMatrix in="n" type="matrix" values="0 0 0 0 0.35  0 0 0 0 0.75  0 0 0 0 0.95  4 0 0 0 -2.2"/></filter><filter id="ann2" x="0" y="0" width="100%" height="100%" color-interpolation-filters="sRGB"><feTurbulence type="fractalNoise" baseFrequency="0.35" numOctaves="2" seed="8" result="n"/><feColorMatrix in="n" type="matrix" values="0 0 0 0 0.88  0 0 0 0 0.45  0 0 0 0 0.95  4 0 0 0 -2.2"/></filter></defs>
<rect width="128" height="128" fill="#8a80fa"/>
<g filter="url(#anb)">
<path d="M8 7 C10 3 14 3 16 7 C18 3 22 3 25 7 C29 16 30 40 30 100 C30 112 27 118 18 118 C9 118 6 112 5 100 C4 60 3 20 8 7Z" fill="#52b0f2" transform="translate(-1.2,0)"/>
<path d="M8 7 C10 3 14 3 16 7 C18 3 22 3 25 7 C29 16 30 40 30 100 C30 112 27 118 18 118 C9 118 6 112 5 100 C4 60 3 20 8 7Z" fill="#e070f0" transform="translate(1.2,0)"/>
<path d="M8 7 C10 3 14 3 16 7 C18 3 22 3 25 7 C29 16 30 40 30 100 C30 112 27 118 18 118 C9 118 6 112 5 100 C4 60 3 20 8 7Z" fill="#8a88f8"/>
<path d="M5 12 Q17.5 8 30 12" stroke="#b090ff" stroke-width="1.0" fill="none"/><path d="M5 16 Q17.5 12 30 16" stroke="#b090ff" stroke-width="1.0" fill="none"/><path d="M5 20 Q17.5 16 30 20" stroke="#b090ff" stroke-width="1.0" fill="none"/><path d="M5 24 Q17.5 20 30 24" stroke="#b090ff" stroke-width="1.0" fill="none"/><path d="M5 28 Q17.5 24 30 28" stroke="#b090ff" stroke-width="1.0" fill="none"/><path d="M5 32 Q17.5 28 30 32" stroke="#b090ff" stroke-width="1.0" fill="none"/><path d="M5 36 Q17.5 32 30 36" stroke="#b090ff" stroke-width="1.0" fill="none"/><path d="M5 40 Q17.5 36 30 40" stroke="#b090ff" stroke-width="1.0" fill="none"/><path d="M5 44 Q17.5 40 30 44" stroke="#b090ff" stroke-width="1.0" fill="none"/><path d="M5 48 Q17.5 44 30 48" stroke="#b090ff" stroke-width="1.0" fill="none"/><path d="M5 52 Q17.5 48 30 52" stroke="#b090ff" stroke-width="1.0" fill="none"/><path d="M5 56 Q17.5 52 30 56" stroke="#b090ff" stroke-width="1.0" fill="none"/><path d="M5 60 Q17.5 56 30 60" stroke="#b090ff" stroke-width="1.0" fill="none"/><path d="M5 64 Q17.5 60 30 64" stroke="#b090ff" stroke-width="1.0" fill="none"/><path d="M5 68 Q17.5 64 30 68" stroke="#b090ff" stroke-width="1.0" fill="none"/><path d="M5 72 Q17.5 68 30 72" stroke="#b090ff" stroke-width="1.0" fill="none"/><path d="M5 76 Q17.5 72 30 76" stroke="#b090ff" stroke-width="1.0" fill="none"/><path d="M5 80 Q17.5 76 30 80" stroke="#b090ff" stroke-width="1.0" fill="none"/><path d="M5 84 Q17.5 80 30 84" stroke="#b090ff" stroke-width="1.0" fill="none"/><path d="M5 88 Q17.5 84 30 88" stroke="#b090ff" stroke-width="1.0" fill="none"/><path d="M5 92 Q17.5 88 30 92" stroke="#b090ff" stroke-width="1.0" fill="none"/><path d="M5 96 Q17.5 92 30 96" stroke="#b090ff" stroke-width="1.0" fill="none"/><path d="M5 100 Q17.5 96 30 100" stroke="#b090ff" stroke-width="1.0" fill="none"/><path d="M5 104 Q17.5 100 30 104" stroke="#b090ff" stroke-width="1.0" fill="none"/><path d="M5 108 Q17.5 104 30 108" stroke="#b090ff" stroke-width="1.0" fill="none"/><path d="M5 112 Q17.5 108 30 112" stroke="#b090ff" stroke-width="1.0" fill="none"/><path d="M5 116 Q17.5 112 30 116" stroke="#b090ff" stroke-width="1.0" fill="none"/>
<path d="M5 13.5 Q17.5 9.5 30 13.5" stroke="#6098f4" stroke-width="0.8" fill="none"/><path d="M5 17.5 Q17.5 13.5 30 17.5" stroke="#6098f4" stroke-width="0.8" fill="none"/><path d="M5 21.5 Q17.5 17.5 30 21.5" stroke="#6098f4" stroke-width="0.8" fill="none"/><path d="M5 25.5 Q17.5 21.5 30 25.5" stroke="#6098f4" stroke-width="0.8" fill="none"/><path d="M5 29.5 Q17.5 25.5 30 29.5" stroke="#6098f4" stroke-width="0.8" fill="none"/><path d="M5 33.5 Q17.5 29.5 30 33.5" stroke="#6098f4" stroke-width="0.8" fill="none"/><path d="M5 37.5 Q17.5 33.5 30 37.5" stroke="#6098f4" stroke-width="0.8" fill="none"/><path d="M5 41.5 Q17.5 37.5 30 41.5" stroke="#6098f4" stroke-width="0.8" fill="none"/><path d="M5 45.5 Q17.5 41.5 30 45.5" stroke="#6098f4" stroke-width="0.8" fill="none"/><path d="M5 49.5 Q17.5 45.5 30 49.5" stroke="#6098f4" stroke-width="0.8" fill="none"/><path d="M5 53.5 Q17.5 49.5 30 53.5" stroke="#6098f4" stroke-width="0.8" fill="none"/><path d="M5 57.5 Q17.5 53.5 30 57.5" stroke="#6098f4" stroke-width="0.8" fill="none"/><path d="M5 61.5 Q17.5 57.5 30 61.5" stroke="#6098f4" stroke-width="0.8" fill="none"/><path d="M5 65.5 Q17.5 61.5 30 65.5" stroke="#6098f4" stroke-width="0.8" fill="none"/><path d="M5 69.5 Q17.5 65.5 30 69.5" stroke="#6098f4" stroke-width="0.8" fill="none"/><path d="M5 73.5 Q17.5 69.5 30 73.5" stroke="#6098f4" stroke-width="0.8" fill="none"/><path d="M5 77.5 Q17.5 73.5 30 77.5" stroke="#6098f4" stroke-width="0.8" fill="none"/><path d="M5 81.5 Q17.5 77.5 30 81.5" stroke="#6098f4" stroke-width="0.8" fill="none"/><path d="M5 85.5 Q17.5 81.5 30 85.5" stroke="#6098f4" stroke-width="0.8" fill="none"/><path d="M5 89.5 Q17.5 85.5 30 89.5" stroke="#6098f4" stroke-width="0.8" fill="none"/><path d="M5 93.5 Q17.5 89.5 30 93.5" stroke="#6098f4" stroke-width="0.8" fill="none"/><path d="M5 97.5 Q17.5 93.5 30 97.5" stroke="#6098f4" stroke-width="0.8" fill="none"/><path d="M5 101.5 Q17.5 97.5 30 101.5" stroke="#6098f4" stroke-width="0.8" fill="none"/><path d="M5 105.5 Q17.5 101.5 30 105.5" stroke="#6098f4" stroke-width="0.8" fill="none"/><path d="M5 109.5 Q17.5 105.5 30 109.5" stroke="#6098f4" stroke-width="0.8" fill="none"/><path d="M5 113.5 Q17.5 109.5 30 113.5" stroke="#6098f4" stroke-width="0.8" fill="none"/><path d="M5 117.5 Q17.5 113.5 30 117.5" stroke="#6098f4" stroke-width="0.8" fill="none"/>
<rect x="33" y="63" width="54" height="61" fill="#58b4f0" opacity="0.8"/>
<rect x="34.5" y="63" width="53" height="61" fill="#c070f0" opacity="0.8"/>
<rect x="34.5" y="65" width="51.5" height="58" fill="#8c86f6"/>
<path d="M36 66 L86 66 L86 76 C70 70 50 70 36 76Z" fill="#b878f0" opacity="0.6"/>
<circle cx="60" cy="96" r="23" fill="none" stroke="#d874f0" stroke-width="2" opacity="0.7" transform="translate(1,-1)"/>
<circle cx="60" cy="96" r="23" fill="none" stroke="#58b8f0" stroke-width="2" opacity="0.6" transform="translate(-1,1)"/>
<rect x="35" y="65" width="51" height="57" filter="url(#ann)"/><rect x="35" y="65" width="51" height="57" filter="url(#ann2)"/>
<path d="M36 120 L86 122" stroke="#e070f0" stroke-width="2" opacity="0.6"/>
</g>
</svg></div><div class="lb">acacia_normal</div></div><div class="cell" style="left:913px;top:173px"><div class="th t16"><svg width="128" height="128" viewBox="0 0 128 128"><defs></defs><rect width="128" height="128" fill="#ffffff"/></svg></div><div class="lb">acacia_roughness</div></div><div class="cell" style="left:3px;top:343px"><div class="th t17"><svg width="128" height="128" viewBox="0 0 128 128"><defs><radialGradient id="afg" cx="0.53" cy="0.48" r="0.72"><stop offset="0" stop-color="#f86000"/><stop offset="0.22" stop-color="#fa8400"/><stop offset="0.55" stop-color="#fdc800"/><stop offset="0.85" stop-color="#fff400"/><stop offset="1" stop-color="#ffff00"/></radialGradient></defs>
<rect width="128" height="128" fill="url(#afg)"/>
</svg></div><div class="lb">acaciaflower_gradient</div></div><div class="cell" style="left:133px;top:343px"><div class="th t18"><svg width="128" height="128" viewBox="0 0 128 128"><defs></defs>
<rect width="128" height="128" fill="#434f15"/>
<rect x="40" y="0" width="10" height="128" fill="#404c14" filter="url(#gfb)"/>
<rect x="84" y="0" width="8" height="128" fill="#414d14" filter="url(#gfb)"/>
<g fill="none" stroke="#8a8a4c" stroke-width="0.9" stroke-dasharray="1 1.2" opacity="0.75">
<path d="M12 3 L16 8 L20 3 L25 8 C30 22 34 50 36 80 C37 100 37 118 22 122 C10 123 7 115 7 100 C6 70 2 45 2 22 C2 14 6 6 12 3Z"/><path d="M60 3 L63 8 L67 4 L73 9 C78 24 81 60 81 90 C81 110 79 121 66 122 C53 122 50 112 50 95 C49 70 48 40 50 18 C52 10 56 6 60 3Z"/><path d="M102 2 L106 8 L110 4 L116 11 C121 25 125 50 126 80 C126 105 124 121 108 122 C94 122 91 112 91 95 C91 65 92 35 95 15 C97 9 100 5 102 2Z"/></g>
<path d="M16 8 C18 50 20 90 21 128 M64 6 C65 50 66 90 66 128 M108 6 C108 50 107 90 106 128" stroke="#8e8a50" stroke-width="1" stroke-dasharray="1.5 0.8" fill="none" opacity="0.8"/>
<path d="M20 40 L30 38 M20 60 L32 56 M66 40 L76 38 M108 50 L122 46 M20 90 L34 86" stroke="#7a7a40" stroke-width="0.6" opacity="0.5"/>
</svg></div><div class="lb">acacialeaves_basecolor</div></div><div class="cell" style="left:263px;top:343px"><div class="th t19"><svg width="128" height="128" viewBox="0 0 128 128"><defs></defs>
<rect width="128" height="128" fill="#8280fc"/>
<defs><clipPath id="alc"><path d="M12 3 L16 8 L20 3 L25 8 C30 22 34 50 36 80 C37 100 37 118 22 122 C10 123 7 115 7 100 C6 70 2 45 2 22 C2 14 6 6 12 3Z"/><path d="M60 3 L63 8 L67 4 L73 9 C78 24 81 60 81 90 C81 110 79 121 66 122 C53 122 50 112 50 95 C49 70 48 40 50 18 C52 10 56 6 60 3Z"/><path d="M102 2 L106 8 L110 4 L116 11 C121 25 125 50 126 80 C126 105 124 121 108 122 C94 122 91 112 91 95 C91 65 92 35 95 15 C97 9 100 5 102 2Z"/></clipPath></defs>
<g fill="#9a84f4"><path d="M12 3 L16 8 L20 3 L25 8 C30 22 34 50 36 80 C37 100 37 118 22 122 C10 123 7 115 7 100 C6 70 2 45 2 22 C2 14 6 6 12 3Z"/><path d="M60 3 L63 8 L67 4 L73 9 C78 24 81 60 81 90 C81 110 79 121 66 122 C53 122 50 112 50 95 C49 70 48 40 50 18 C52 10 56 6 60 3Z"/><path d="M102 2 L106 8 L110 4 L116 11 C121 25 125 50 126 80 C126 105 124 121 108 122 C94 122 91 112 91 95 C91 65 92 35 95 15 C97 9 100 5 102 2Z"/></g>
<g clip-path="url(#alc)" fill="#7c8afa">
<path d="M17 0 L128 0 L128 128 L21 128 C20 90 18 50 17 0Z M64 0 L0 0 L0 0Z"/>
</g>
<g clip-path="url(#alc)" fill="#9a84f4"><path d="M40 0 L65 0 C66 50 66 90 66 128 L40 128Z M88 0 L108 0 C108 50 107 90 106 128 L88 128Z"/></g>
<g fill="none" stroke="#d070f0" stroke-width="1.1" stroke-dasharray="1 1" opacity="0.8" transform="translate(-0.7,0)">
<path d="M12 3 L16 8 L20 3 L25 8 C30 22 34 50 36 80 C37 100 37 118 22 122 C10 123 7 115 7 100 C6 70 2 45 2 22 C2 14 6 6 12 3Z"/><path d="M60 3 L63 8 L67 4 L73 9 C78 24 81 60 81 90 C81 110 79 121 66 122 C53 122 50 112 50 95 C49 70 48 40 50 18 C52 10 56 6 60 3Z"/><path d="M102 2 L106 8 L110 4 L116 11 C121 25 125 50 126 80 C126 105 124 121 108 122 C94 122 91 112 91 95 C91 65 92 35 95 15 C97 9 100 5 102 2Z"/></g>
<g fill="none" stroke="#60a8f4" stroke-width="1" stroke-dasharray="1 1" opacity="0.8" transform="translate(0.7,0)">
<path d="M12 3 L16 8 L20 3 L25 8 C30 22 34 50 36 80 C37 100 37 118 22 122 C10 123 7 115 7 100 C6 70 2 45 2 22 C2 14 6 6 12 3Z"/><path d="M60 3 L63 8 L67 4 L73 9 C78 24 81 60 81 90 C81 110 79 121 66 122 C53 122 50 112 50 95 C49 70 48 40 50 18 C52 10 56 6 60 3Z"/><path d="M102 2 L106 8 L110 4 L116 11 C121 25 125 50 126 80 C126 105 124 121 108 122 C94 122 91 112 91 95 C91 65 92 35 95 15 C97 9 100 5 102 2Z"/></g>
<path d="M16 8 C18 50 20 90 21 128 M64 6 C65 50 66 90 66 128 M108 6 C108 50 107 90 106 128" stroke="#d080f0" stroke-width="1" fill="none"/>
<g clip-path="url(#alc)" stroke="#60c0f4" stroke-width="1.6" fill="none" opacity="0.6" filter="url(#gfb)">
<path d="M21 28 C26 24 30 24 33 26 M21 36 C26 32 30 32 33 34 M66 30 C70 28 74 28 78 30 M66 36 C70 34 74 34 78 36 M96 22 C100 20 104 22 108 26 M10 110 C16 108 20 110 34 112 M54 110 C60 108 66 112 78 112 M96 110 C104 108 110 112 124 114"/>
</g>
</svg></div><div class="lb">acacialeaves_normal</div></div><div class="cell" style="left:393px;top:343px"><div class="th t20"><svg width="128" height="128" viewBox="0 0 128 128"><defs></defs>
<rect width="128" height="128" fill="#000"/>
<g fill="#fff"><path d="M12 3 L16 8 L20 3 L25 8 C30 22 34 50 36 80 C37 100 37 118 22 122 C10 123 7 115 7 100 C6 70 2 45 2 22 C2 14 6 6 12 3Z"/><path d="M60 3 L63 8 L67 4 L73 9 C78 24 81 60 81 90 C81 110 79 121 66 122 C53 122 50 112 50 95 C49 70 48 40 50 18 C52 10 56 6 60 3Z"/><path d="M102 2 L106 8 L110 4 L116 11 C121 25 125 50 126 80 C126 105 124 121 108 122 C94 122 91 112 91 95 C91 65 92 35 95 15 C97 9 100 5 102 2Z"/></g>
<g fill="none" stroke="#fff" stroke-width="2.5" stroke-dasharray="1.2 1.5"><path d="M12 3 L16 8 L20 3 L25 8 C30 22 34 50 36 80 C37 100 37 118 22 122 C10 123 7 115 7 100 C6 70 2 45 2 22 C2 14 6 6 12 3Z"/><path d="M60 3 L63 8 L67 4 L73 9 C78 24 81 60 81 90 C81 110 79 121 66 122 C53 122 50 112 50 95 C49 70 48 40 50 18 C52 10 56 6 60 3Z"/><path d="M102 2 L106 8 L110 4 L116 11 C121 25 125 50 126 80 C126 105 124 121 108 122 C94 122 91 112 91 95 C91 65 92 35 95 15 C97 9 100 5 102 2Z"/></g>
<path d="M16 8 C18 50 20 90 21 128 M64 6 C65 50 66 90 66 128 M108 6 C108 50 107 90 106 128" stroke="#555" stroke-width="1.3" stroke-dasharray="1 1" fill="none"/>
</svg></div><div class="lb">acacialeaves_opacity</div></div><div class="cell" style="left:523px;top:343px"><div class="th t21"><svg width="128" height="128" viewBox="0 0 128 128"><defs><filter id="wb21" x="0" y="0" width="100%" height="100%"><feGaussianBlur stdDeviation="0.4"/></filter></defs><g filter="url(#wb21)">
<rect width="128" height="128" fill="#c9c9c9"/>
<g fill="#dedede"><path d="M12 3 L16 8 L20 3 L25 8 C30 22 34 50 36 80 C37 100 37 118 22 122 C10 123 7 115 7 100 C6 70 2 45 2 22 C2 14 6 6 12 3Z"/><path d="M60 3 L63 8 L67 4 L73 9 C78 24 81 60 81 90 C81 110 79 121 66 122 C53 122 50 112 50 95 C49 70 48 40 50 18 C52 10 56 6 60 3Z"/><path d="M102 2 L106 8 L110 4 L116 11 C121 25 125 50 126 80 C126 105 124 121 108 122 C94 122 91 112 91 95 C91 65 92 35 95 15 C97 9 100 5 102 2Z"/></g>
<g fill="none" stroke="#f4f4f4" stroke-width="1.4" stroke-dasharray="1.2 0.8">
<path d="M12 3 L16 8 L20 3 L25 8 C30 22 34 50 36 80 C37 100 37 118 22 122 C10 123 7 115 7 100 C6 70 2 45 2 22 C2 14 6 6 12 3Z"/><path d="M60 3 L63 8 L67 4 L73 9 C78 24 81 60 81 90 C81 110 79 121 66 122 C53 122 50 112 50 95 C49 70 48 40 50 18 C52 10 56 6 60 3Z"/><path d="M102 2 L106 8 L110 4 L116 11 C121 25 125 50 126 80 C126 105 124 121 108 122 C94 122 91 112 91 95 C91 65 92 35 95 15 C97 9 100 5 102 2Z"/></g>
<path d="M16 8 C18 50 20 90 21 128 M64 6 C65 50 66 90 66 128 M108 6 C108 50 107 90 106 128" stroke="#f8f8f8" stroke-width="1.2" fill="none"/>
</g></svg></div><div class="lb">acacialeaves_roughnes<br>s</div></div><div class="cell" style="left:653px;top:343px"><div class="th t22"><svg width="128" height="128" viewBox="0 0 128 128"><defs><linearGradient id="agb" x1="0" y1="0" x2="0" y2="1"><stop offset="0" stop-color="#92ac98"/><stop offset="0.6" stop-color="#6c8474"/><stop offset="1" stop-color="#46544a"/></linearGradient><filter id="wb22" x="0" y="0" width="100%" height="100%"><feGaussianBlur stdDeviation="0.8"/></filter></defs><g filter="url(#wb22)">
<rect width="128" height="128" fill="#343c36"/>
<polygon points="0,0 128,0 128,60 40,50 0,56" fill="url(#agb)"/>
<g stroke-width="2.5" fill="none" opacity="0.8">
<path d="M0 6 L40 14" stroke="#9ab4a0"/><path d="M0 18 L40 20" stroke="#7e9886"/>
<path d="M0 30 L40 30" stroke="#88a290"/><path d="M0 42 L40 40" stroke="#627868"/>
<path d="M44 12 L128 0" stroke="#a0baa4"/><path d="M44 20 L128 10" stroke="#86a08c"/>
<path d="M44 28 L128 22" stroke="#90aa96"/><path d="M44 36 L128 36" stroke="#74907c"/>
<path d="M44 44 L128 48" stroke="#5e7666"/>
</g>
<polygon points="30,0 56,0 44,6" fill="#c89a98" opacity="0.8"/>
<path d="M40 4 C35 15 35 35 40 48 C45 35 45 15 40 4Z" fill="#a0c0a8" opacity="0.7"/>
<path d="M0 72 L36 64" stroke="#4a5a50" stroke-width="0.8"/>
</g></svg></div><div class="lb">agave_basecolor</div></div><div class="cell" style="left:783px;top:343px"><div class="th t23"><svg width="128" height="128" viewBox="0 0 128 128"><defs><filter id="wb23" x="0" y="0" width="100%" height="100%"><feGaussianBlur stdDeviation="0.8"/></filter></defs><g filter="url(#wb23)">
<rect width="128" height="128" fill="#7280fc"/>
<polygon points="0,0 41,0 41,128 0,128" fill="#9a78f4"/>
<polygon points="0,70 41,62 41,128 0,128" fill="#a078f0"/>
<polygon points="0,128 0,100 41,62 41,128" fill="#a876f0" opacity="0.6"/>
<polygon points="43,0 128,0 128,66 43,62" fill="#7e84fa"/>
<g stroke-width="2.5" fill="none" opacity="0.8">
<path d="M0 10 L40 14" stroke="#8a90f8"/><path d="M0 28 L40 30" stroke="#b070f0"/>
<path d="M0 42 L40 40" stroke="#6a90f8"/><path d="M0 52 L40 48" stroke="#7a88f8"/>
<path d="M0 62 L40 56" stroke="#b470f0"/>
<path d="M44 6 L128 -2" stroke="#6a80f4" stroke-width="5"/><path d="M44 20 L128 6" stroke="#70a0f8"/>
<path d="M44 28 L128 28" stroke="#a080f4" stroke-width="5"/><path d="M44 40 L128 44" stroke="#8880f8"/>
<path d="M44 48 L128 54" stroke="#a078f4" stroke-width="3"/><path d="M44 56 L128 62" stroke="#8a82f8"/>
</g>
<rect x="40" y="60" width="3" height="68" fill="#b078f0"/>
<path d="M41 5 C35 20 35 45 41 62 C46 45 46 20 41 5Z" fill="#6090f4"/>
<path d="M38 25 C36 35 37 48 40 58" stroke="#d878f0" stroke-width="2" fill="none"/>
</g></svg></div><div class="lb">agave_normal</div></div><div class="cell" style="left:913px;top:343px"><div class="th t24"><svg width="128" height="128" viewBox="0 0 128 128"><defs><filter id="b24a" x="0" y="0" width="100%" height="100%" color-interpolation-filters="sRGB"><feTurbulence type="fractalNoise" baseFrequency="0.07 0.035" numOctaves="3" seed="11" result="n"/><feColorMatrix in="n" type="matrix" values="0 0 0 0 0.43  0 0 0 0 0.3  0 0 0 0 0.24  2.2 0 0 0 -0.9"/></filter><filter id="b24b" x="0" y="0" width="100%" height="100%" color-interpolation-filters="sRGB"><feTurbulence type="turbulence" baseFrequency="0.11 0.045" numOctaves="1" seed="4" result="n"/><feColorMatrix in="n" type="matrix" values="0 0 0 0 0.16  0 0 0 0 0.12  0 0 0 0 0.09  -50 0 0 0 2.2"/></filter></defs>
<rect width="128" height="128" fill="#4f3b2f"/>
<rect width="128" height="128" filter="url(#b24a)"/>
<rect width="128" height="128" filter="url(#b24b)"/>
</svg></div><div class="lb">alter49_tree10_basecol<br>or</div></div><div class="cell" style="left:3px;top:513px"><div class="th t25"><svg width="128" height="128" viewBox="0 0 128 128"><defs><filter id="b25c" x="0" y="0" width="100%" height="100%" color-interpolation-filters="sRGB"><feTurbulence type="fractalNoise" baseFrequency="0.05 0.03" numOctaves="3" seed="17" result="n"/><feColorMatrix in="n" type="matrix" values="0 0 0 0 0.55  0 0 0 0 0.52  0 0 0 0 0.98  1.2 0 0 0 -0.5"/></filter><filter id="b25a" x="0" y="0" width="100%" height="100%" color-interpolation-filters="sRGB"><feTurbulence type="turbulence" baseFrequency="0.11 0.045" numOctaves="1" seed="8" result="n"/><feColorMatrix in="n" type="matrix" values="0 0 0 0 0.82  0 0 0 0 0.48  0 0 0 0 0.95  -40 0 0 0 1.5"/></filter><filter id="b25b" x="0" y="0" width="100%" height="100%" color-interpolation-filters="sRGB"><feTurbulence type="turbulence" baseFrequency="0.11 0.045" numOctaves="1" seed="8" result="n"/><feColorMatrix in="n" type="matrix" values="0 0 0 0 0.45  0 0 0 0 0.62  0 0 0 0 0.96  -40 0 0 0 1.3"/></filter></defs>
<rect width="128" height="128" fill="#8a82f6"/>
<rect width="128" height="128" filter="url(#b25c)"/>
<rect width="128" height="128" filter="url(#b25a)" transform="translate(-0.8,0)"/>
<rect width="128" height="128" filter="url(#b25b)" transform="translate(0.8,0)"/>
</svg></div><div class="lb">alter49_tree10_normal</div></div><div class="cell" style="left:133px;top:513px"><div class="th t26"><svg width="128" height="128" viewBox="0 0 128 128"><defs><filter id="b26c" x="0" y="0" width="100%" height="100%" color-interpolation-filters="sRGB"><feTurbulence type="fractalNoise" baseFrequency="0.05 0.03" numOctaves="3" seed="19" result="n"/><feColorMatrix in="n" type="matrix" values="0 0 0 0 0.84  0 0 0 0 0.84  0 0 0 0 0.84  1.0 0 0 0 -0.45"/></filter><filter id="b26a" x="0" y="0" width="100%" height="100%" color-interpolation-filters="sRGB"><feTurbulence type="turbulence" baseFrequency="0.11 0.045" numOctaves="1" seed="9" result="n"/><feColorMatrix in="n" type="matrix" values="0 0 0 0 0.92  0 0 0 0 0.92  0 0 0 0 0.92  -40 0 0 0 1.5"/></filter></defs>
<rect width="128" height="128" fill="#dedede"/>
<rect width="128" height="128" filter="url(#b26c)"/>
<rect width="128" height="128" filter="url(#b26a)"/>
</svg></div><div class="lb">alter49_tree10_roughne<br>ss</div></div><div class="cell" style="left:263px;top:513px"><div class="th t27"><svg width="128" height="128" viewBox="0 0 128 128"><defs><filter id="b27a" x="0" y="0" width="100%" height="100%" color-interpolation-filters="sRGB"><feTurbulence type="fractalNoise" baseFrequency="0.22 0.08" numOctaves="4" seed="21" result="n"/><feColorMatrix in="n" type="matrix" values="0 0 0 0 0.5  0 0 0 0 0.49  0 0 0 0 0.47  2.0 0 0 0 -0.8"/></filter><filter id="b27b" x="0" y="0" width="100%" height="100%" color-interpolation-filters="sRGB"><feTurbulence type="turbulence" baseFrequency="0.1 0.035" numOctaves="3" seed="5" result="n"/><feColorMatrix in="n" type="matrix" values="0 0 0 0 0.22  0 0 0 0 0.21  0 0 0 0 0.2  -20 0 0 0 2.4"/></filter></defs>
<rect width="128" height="128" fill="#514f4c"/>
<rect width="128" height="128" filter="url(#b27a)"/>
<rect width="128" height="128" filter="url(#b27b)"/>
</svg></div><div class="lb">alter49_tree1_basecolor</div></div><div class="cell" style="left:393px;top:513px"><div class="th t28"><svg width="128" height="128" viewBox="0 0 128 128"><defs><filter id="b28p" x="0" y="0" width="100%" height="100%" color-interpolation-filters="sRGB"><feTurbulence type="fractalNoise" baseFrequency="0.09 0.025" numOctaves="3" seed="62" result="n"/><feColorMatrix in="n" type="matrix" values="0 0 0 0 0.92  0 0 0 0 0.45  0 0 0 0 0.95  14 0 0 0 -7.6"/></filter><filter id="b28q" x="0" y="0" width="100%" height="100%" color-interpolation-filters="sRGB"><feTurbulence type="fractalNoise" baseFrequency="0.09 0.025" numOctaves="3" seed="62" result="n"/><feColorMatrix in="n" type="matrix" values="0 0 0 0 0.4  0 0 0 0 0.72  0 0 0 0 0.98  14 0 0 0 -7.6"/></filter><filter id="b28m" x="0" y="0" width="100%" height="100%" color-interpolation-filters="sRGB"><feTurbulence type="fractalNoise" baseFrequency="0.09 0.025" numOctaves="3" seed="62" result="n"/><feColorMatrix in="n" type="matrix" values="0 0 0 0 0.56  0 0 0 0 0.52  0 0 0 0 0.97  14 0 0 0 -7.6"/></filter></defs>
<rect width="128" height="128" fill="#8a82f8"/>
<rect width="128" height="128" filter="url(#b28p)" transform="translate(-1.2,0)" opacity="0.7"/>
<rect width="128" height="128" filter="url(#b28q)" transform="translate(1.2,0)" opacity="0.7"/>
<rect width="128" height="128" filter="url(#b28m)"/>
</svg></div><div class="lb">alter49_tree1_normal</div></div><div class="cell" style="left:523px;top:513px"><div class="th t29"><svg width="128" height="128" viewBox="0 0 128 128"><defs><filter id="b29a" x="0" y="0" width="100%" height="100%" color-interpolation-filters="sRGB"><feTurbulence type="fractalNoise" baseFrequency="0.08 0.03" numOctaves="3" seed="31" result="n"/><feColorMatrix in="n" type="matrix" values="0 0 0 0 0.84  0 0 0 0 0.84  0 0 0 0 0.84  1.6 0 0 0 -0.75"/></filter></defs>
<rect width="128" height="128" fill="#e2e2e2"/>
<rect width="128" height="128" filter="url(#b29a)"/>
</svg></div><div class="lb">alter49_tree1_roughnes<br>s</div></div><div class="cell" style="left:653px;top:513px"><div class="th t30"><svg width="128" height="128" viewBox="0 0 128 128"><defs><filter id="b30a" x="0" y="0" width="100%" height="100%" color-interpolation-filters="sRGB"><feTurbulence type="fractalNoise" baseFrequency="0.1 0.05" numOctaves="4" seed="41" result="n"/><feColorMatrix in="n" type="matrix" values="0 0 0 0 0.5  0 0 0 0 0.49  0 0 0 0 0.45  1.6 0 0 0 -0.8"/></filter><filter id="b30bl" x="-20%" y="-20%" width="140%" height="140%"><feGaussianBlur stdDeviation="3"/></filter><filter id="b30s" x="0" y="0" width="100%" height="100%" color-interpolation-filters="sRGB"><feTurbulence type="fractalNoise" baseFrequency="0.25 0.12" numOctaves="3" seed="43" result="n"/><feColorMatrix in="n" type="matrix" values="0 0 0 0 0.3  0 0 0 0 0.31  0 0 0 0 0.27  14 0 0 0 -9.8"/></filter><filter id="b30d" x="-10%" y="-10%" width="120%" height="120%"><feTurbulence type="fractalNoise" baseFrequency="0.35" numOctaves="2" seed="4" result="t"/><feDisplacementMap in="SourceGraphic" in2="t" scale="4" xChannelSelector="R" yChannelSelector="G" result="d"/><feGaussianBlur in="d" stdDeviation="0.5"/></filter></defs>
<rect width="128" height="128" fill="#dbd9d3"/>
<rect width="128" height="128" filter="url(#b30a)"/>
<path d="M36 32 L58 32 L60 50 L38 50Z M42 94 L50 94 L50 124 L42 124Z M60 64 L80 64 L80 96 L60 96Z" fill="#b4ac9c" opacity="0.5" filter="url(#b30bl)"/>
<rect width="128" height="128" filter="url(#b30s)"/>
<g fill="#33362c" filter="url(#b30d)">
<path d="M18 15 L26 8 L30 0 L48 0 L54 10 L56 15 L40 16Z"/>
<path d="M38 28 L48 22 L54 16 L60 18 L64 22 L64 32 L48 30Z"/>
<path d="M0 16 L6 18 L14 24 L10 28 L0 26Z"/>
<path d="M2 36 L12 28 L16 34 L17 42 L10 40 L4 38Z"/>
<path d="M20 34 L26 34 L26 38 L20 38Z M28 47 L35 47 L35 50 L28 50Z M40 51 L60 51 L58 54 L42 54Z M10 56 L14 56 L14 64 L10 64Z M0 52 L4 52 L4 57 L0 57Z M14 8 L18 8 L18 12 L14 12Z"/>
<path d="M68 3 L84 5 L80 7 L68 6Z"/>
<path d="M104 20 L110 10 L114 6 L122 10 L128 14 L128 22 L112 24Z"/>
<path d="M64 16 L68 20 L70 30 L64 36Z"/>
<path d="M76 22 L84 20 L92 18 L98 24 L96 32 L92 48 L84 52 L78 46 L80 36 L76 30Z"/>
<path d="M116 53 L128 53 L128 57 L116 57Z M98 56 L108 58 L106 62 L98 60Z"/>
<path d="M0 80 L4 78 L10 84 L16 84 L22 90 L26 90 L32 96 L28 100 L0 100Z"/>
<path d="M22 80 L30 80 L30 86 L22 86Z"/>
<path d="M34 78 L40 70 L46 72 L50 80 L46 86 L36 84Z"/>
<path d="M46 74 L54 70 L62 76 L72 86 L64 88 L50 84Z"/>
<path d="M82 76 L92 64 L104 66 L112 70 L100 76Z"/>
<path d="M84 84 L96 82 L100 86 L86 88Z"/>
<path d="M104 90 L110 84 L114 76 L118 80 L122 84 L128 86 L128 104 L118 102 L104 96Z"/>
<path d="M52 102 L72 100 L74 104 L54 106Z"/>
<path d="M36 113 L48 112 L50 116 L38 116Z"/>
<path d="M30 128 L34 122 L44 120 L46 128Z"/>
<path d="M102 116 L108 112 L126 114 L122 118 L104 118Z"/>
<path d="M84 95 L88 95 L88 99 L84 99Z M90 105 L94 105 L94 109 L90 109Z M86 111 L90 111 L90 114 L86 114Z"/>
</g>
<circle cx="85" cy="32" r="3" fill="#c8c6c0" filter="url(#gfb)"/>
</svg></div><div class="lb">alter49_tree4_basecolor</div></div><div class="cell" style="left:783px;top:513px"><div class="th t31"><svg width="128" height="128" viewBox="0 0 128 128"><defs><filter id="b31c" x="0" y="0" width="100%" height="100%" color-interpolation-filters="sRGB"><feTurbulence type="fractalNoise" baseFrequency="0.04 0.03" numOctaves="3" seed="51" result="n"/><feColorMatrix in="n" type="matrix" values="0 0 0 0 0.45  0 0 0 0 0.6  0 0 0 0 0.98  1.2 0 0 0 -0.5"/></filter><filter id="b31p" x="0" y="0" width="100%" height="100%" color-interpolation-filters="sRGB"><feTurbulence type="fractalNoise" baseFrequency="0.06 0.05" numOctaves="3" seed="52" result="n"/><feColorMatrix in="n" type="matrix" values="0 0 0 0 0.9  0 0 0 0 0.45  0 0 0 0 0.95  12 0 0 0 -6.4"/></filter><filter id="b31q" x="0" y="0" width="100%" height="100%" color-interpolation-filters="sRGB"><feTurbulence type="fractalNoise" baseFrequency="0.06 0.05" numOctaves="3" seed="52" result="n"/><feColorMatrix in="n" type="matrix" values="0 0 0 0 0.4  0 0 0 0 0.72  0 0 0 0 0.98  12 0 0 0 -6.4"/></filter><filter id="b31m" x="0" y="0" width="100%" height="100%" color-interpolation-filters="sRGB"><feTurbulence type="fractalNoise" baseFrequency="0.06 0.05" numOctaves="3" seed="52" result="n"/><feColorMatrix in="n" type="matrix" values="0 0 0 0 0.55  0 0 0 0 0.52  0 0 0 0 0.98  12 0 0 0 -6.4"/></filter></defs>
<rect width="128" height="128" fill="#8a82f8"/>
<rect width="128" height="128" filter="url(#b31c)"/>
<rect width="128" height="128" filter="url(#b31p)" transform="translate(-1.5,-1)" opacity="0.55"/>
<rect width="128" height="128" filter="url(#b31q)" transform="translate(1.5,1)" opacity="0.55"/>
<rect width="128" height="128" filter="url(#b31m)"/>
</svg></div><div class="lb">alter49_tree4_normal</div></div><div class="cell" style="left:913px;top:513px"><div class="th t32"><svg width="128" height="128" viewBox="0 0 128 128"><defs><filter id="b32a" x="0" y="0" width="100%" height="100%" color-interpolation-filters="sRGB"><feTurbulence type="fractalNoise" baseFrequency="0.06 0.04" numOctaves="3" seed="61" result="n"/><feColorMatrix in="n" type="matrix" values="0 0 0 0 0.78  0 0 0 0 0.78  0 0 0 0 0.78  1.8 0 0 0 -0.85"/></filter></defs>
<rect width="128" height="128" fill="#e0e0e0"/>
<rect width="128" height="128" filter="url(#b32a)"/>
</svg></div><div class="lb">alter49_tree4_roughnes<br>s</div></div>
<div class="sb"></div>
<div class="slider"><div class="track"><span class="ghost">s</span><div class="thumb"></div></div>
<svg class="gicon" width="15" height="13" viewBox="0 0 15 13"><rect x="0" y="0" width="14.5" height="12.5" fill="#9a9a9a"/><path d="M7.25 0V12.5M0 5.8H14.5" stroke="#6a6a6a" stroke-width="1"/><rect x="6.5" y="5" width="1.5" height="1.5" fill="#444"/></svg></div>
</div>
<i style="position:absolute;left:0;top:0;width:1px;height:1px;background:#111"></i><i style="position:absolute;right:0;top:0;width:1px;height:1px;background:#111"></i><i style="position:absolute;right:0;bottom:0;width:1px;height:1px;background:#111"></i><i style="position:absolute;left:0;bottom:0;width:1px;height:1px;background:#111"></i>
</body></html>
